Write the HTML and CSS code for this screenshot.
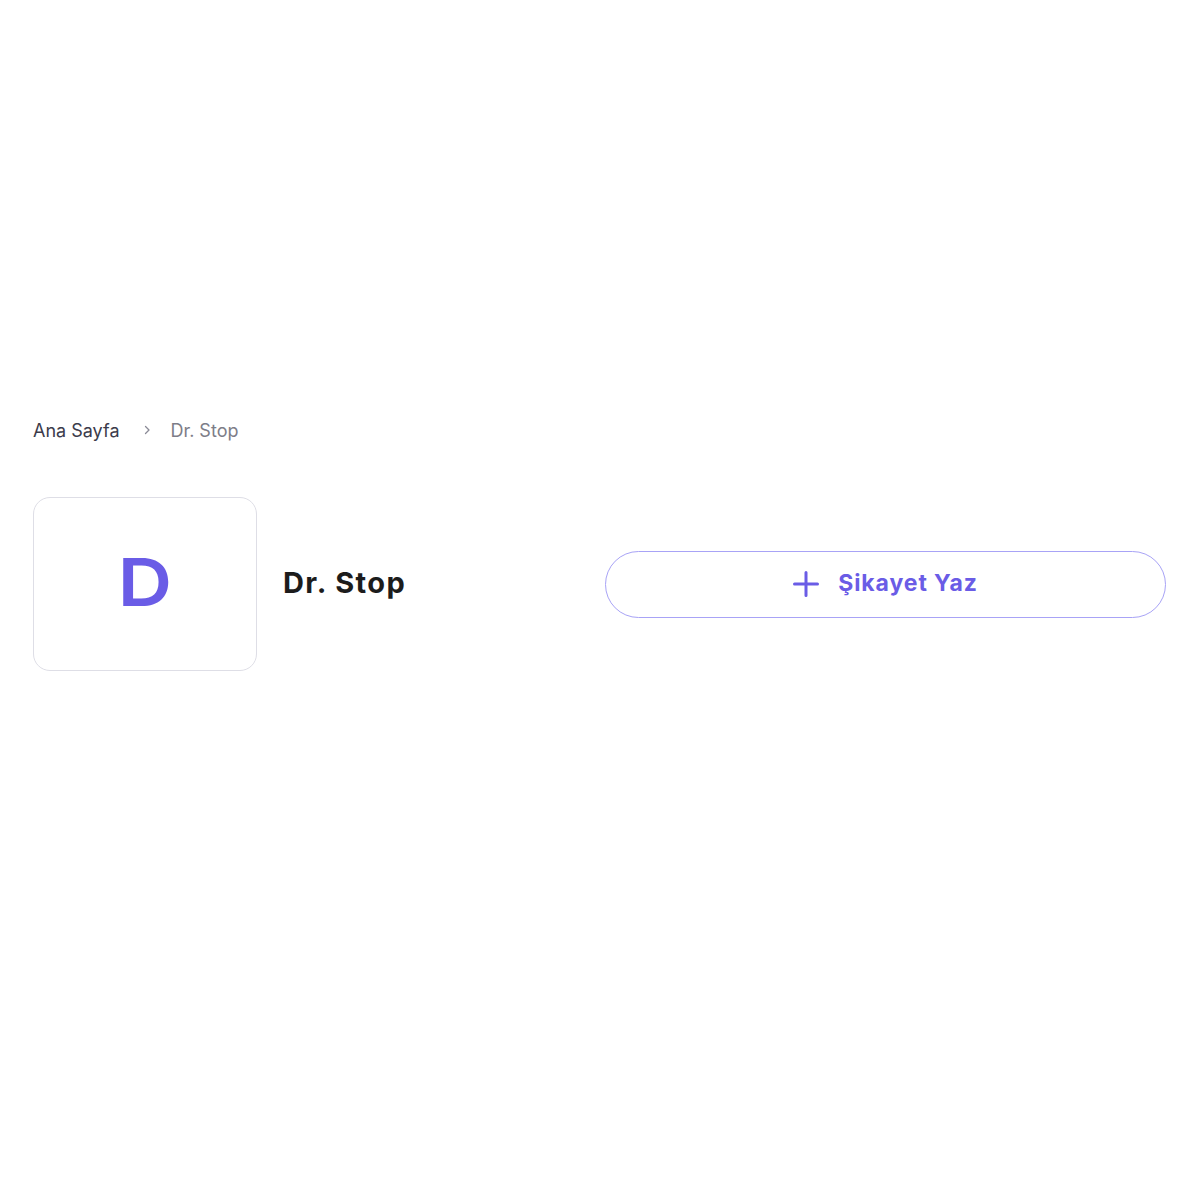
FILE: index.html
```html
<!DOCTYPE html>
<html lang="tr">
<head>
<meta charset="utf-8">
<link rel="stylesheet" href="styles.css">
</head>
<body>
<main class="page">
  <nav class="crumbs">
    <a class="crumb-link" href="#">Ana Sayfa</a>
    <svg class="crumb-sep" width="12" height="12" viewBox="0 0 12 12"><path d="M4.5 2.5 L8 6 L4.5 9.5" fill="none" stroke="#8a8a96" stroke-width="1.3" stroke-linecap="round" stroke-linejoin="round"/></svg>
    <span class="crumb-current">Dr. Stop</span>
  </nav>
  <section class="brand">
    <div class="logo"><span class="logo-letter">D</span></div>
    <h1 class="brand-name">Dr. Stop</h1>
    <a class="write-btn" href="#">
      <svg class="plus" width="26" height="26" viewBox="0 0 26 26"><path d="M13 1.5 V24.5 M1.5 13 H24.5" stroke="#6a5ce6" stroke-width="3" stroke-linecap="round"/></svg>
      <span>Şikayet Yaz</span>
    </a>
  </section>
</main>
</body>
</html>
```
FILE: styles.css
```css
html, body { margin: 0; padding: 0; background: #fff; }
body { font-family: "Inter", "Noto Sans", sans-serif; }
.page { padding: 418px 34px 0 33px; }
.crumbs { display: flex; align-items: center; height: 24px; font-size: 18px; }
.crumb-link { color: #3b3b4b; text-decoration: none; letter-spacing: 0; }
.crumb-sep { margin: 0 17px 0 22px; }
.crumb-current { color: #7d7d88; letter-spacing: 0; }
.brand { display: flex; align-items: center; margin-top: 55px; }
.logo { width: 222px; height: 172px; border: 1px solid #dedee6; border-radius: 17px; display: flex; align-items: center; justify-content: center; }
.logo-letter { display: inline-block; font-size: 66px; font-weight: 600; color: #6a5ce6; line-height: 1; margin: -4px 0 0 0; transform: scaleX(1.14); }
.brand-name { flex: 1; margin: -3px 0 0 26px; font-size: 29px; font-weight: 700; color: #1c1c1c; letter-spacing: 1.4px; }
.write-btn { width: 559px; height: 65px; border: 1px solid #a8a3f6; border-radius: 34px; display: flex; align-items: center; justify-content: center; gap: 19px; text-decoration: none; color: #6a5ce6; font-size: 23px; font-weight: 700; letter-spacing: 0.9px; }
.write-btn span { margin-top: -2px; }
```
